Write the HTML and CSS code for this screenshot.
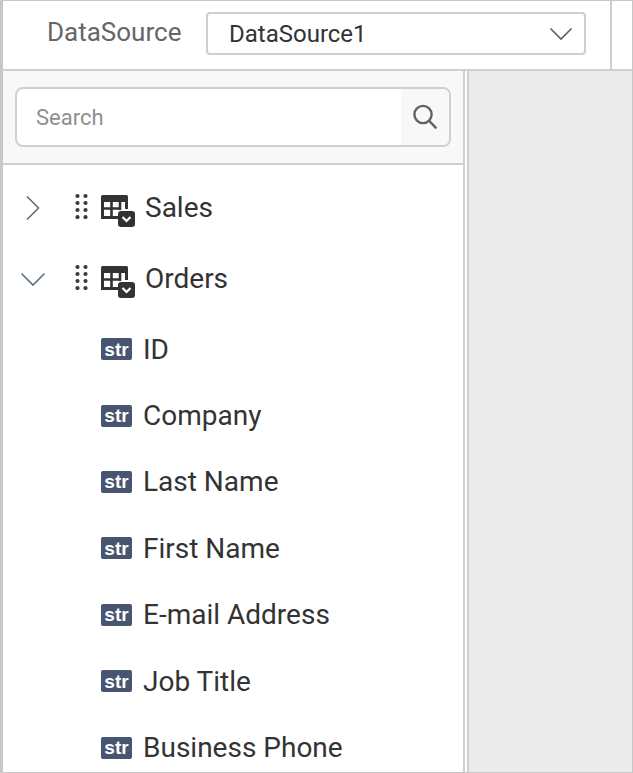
FILE: index.html
```html
<!DOCTYPE html>
<html lang="en">
<head>
<meta charset="utf-8">
<title>Data panel</title>
<link rel="stylesheet" href="styles.css">
</head>
<body>
<div class="frame">
  <header class="topbar">
    <div class="source">
      <span class="source-label">DataSource</span>
      <div class="select">
        <span class="select-value">DataSource1</span>
        <svg class="select-arrow" width="24" height="14" viewBox="0 0 24 14"><path d="M1.5 1.5 L12 12 L22.5 1.5" fill="none" stroke="#55606c" stroke-width="1.6"/></svg>
      </div>
    </div>
    <div class="top-end"></div>
  </header>
  <main class="body">
    <aside class="panel">
      <div class="search-band">
        <div class="search">
          <span class="search-input">Search</span>
          <span class="search-btn">
            <svg width="26" height="26" viewBox="0 0 26 26"><circle cx="11" cy="10.5" r="8.6" fill="none" stroke="#5f6368" stroke-width="2.4"/><path d="M17 16.6 L24.4 24.4" fill="none" stroke="#5f6368" stroke-width="2.4"/></svg>
          </span>
        </div>
      </div>
      <div class="tree">
        <div class="node">
          <svg class="twist" width="26" height="26" viewBox="0 0 26 26"><path d="M7 1.5 L18.5 13 L7 24.5" fill="none" stroke="#5b6f85" stroke-width="1.6"/></svg>
          <svg class="grip" width="14" height="26" viewBox="0 0 14 26"><g fill="#3a3a3a"><circle cx="2.5" cy="3" r="2.1"/><circle cx="10.5" cy="3" r="2.1"/><circle cx="2.5" cy="10" r="2.1"/><circle cx="10.5" cy="10" r="2.1"/><circle cx="2.5" cy="17" r="2.1"/><circle cx="10.5" cy="17" r="2.1"/><circle cx="2.5" cy="24" r="2.1"/><circle cx="10.5" cy="24" r="2.1"/></g></svg>
          <svg class="table" width="36" height="34" viewBox="0 0 36 34"><rect x="1" y="1" width="27" height="7" rx="1.5" fill="#333"/><path d="M26.5 4 V15 M2.5 4 V23.5 H18" fill="none" stroke="#333" stroke-width="3"/><path d="M2 14.5 H20 M11.5 7 V24 M20 7 V16" fill="none" stroke="#333" stroke-width="2.6"/><rect x="18" y="17" width="17" height="16" rx="3" fill="#333"/><path d="M22.5 23 L26.5 27 L30.5 23" fill="none" stroke="#fff" stroke-width="2.2"/></svg>
          <span class="node-name">Sales</span>
        </div>
        <div class="node">
          <svg class="twist" width="26" height="26" viewBox="0 0 26 26"><path d="M1.5 7.5 L13 19 L24.5 7.5" fill="none" stroke="#5b6f85" stroke-width="1.6"/></svg>
          <svg class="grip" width="14" height="26" viewBox="0 0 14 26"><g fill="#3a3a3a"><circle cx="2.5" cy="3" r="2.1"/><circle cx="10.5" cy="3" r="2.1"/><circle cx="2.5" cy="10" r="2.1"/><circle cx="10.5" cy="10" r="2.1"/><circle cx="2.5" cy="17" r="2.1"/><circle cx="10.5" cy="17" r="2.1"/><circle cx="2.5" cy="24" r="2.1"/><circle cx="10.5" cy="24" r="2.1"/></g></svg>
          <svg class="table" width="36" height="34" viewBox="0 0 36 34"><rect x="1" y="1" width="27" height="7" rx="1.5" fill="#333"/><path d="M26.5 4 V15 M2.5 4 V23.5 H18" fill="none" stroke="#333" stroke-width="3"/><path d="M2 14.5 H20 M11.5 7 V24 M20 7 V16" fill="none" stroke="#333" stroke-width="2.6"/><rect x="18" y="17" width="17" height="16" rx="3" fill="#333"/><path d="M22.5 23 L26.5 27 L30.5 23" fill="none" stroke="#fff" stroke-width="2.2"/></svg>
          <span class="node-name">Orders</span>
        </div>
        <ul class="fields">
          <li class="field"><span class="badge">str</span><span class="field-name">ID</span></li>
          <li class="field"><span class="badge">str</span><span class="field-name">Company</span></li>
          <li class="field"><span class="badge">str</span><span class="field-name">Last Name</span></li>
          <li class="field"><span class="badge">str</span><span class="field-name">First Name</span></li>
          <li class="field"><span class="badge">str</span><span class="field-name">E-mail Address</span></li>
          <li class="field"><span class="badge">str</span><span class="field-name">Job Title</span></li>
          <li class="field"><span class="badge">str</span><span class="field-name">Business Phone</span></li>
        </ul>
      </div>
    </aside>
    <div class="canvas"></div>
  </main>
</div>
</body>
</html>
```

FILE: styles.css
```css
* {
  box-sizing: border-box;
}

html,
body {
  margin: 0;
  height: 100%;
  overflow: hidden;
}

body {
  font-family: Roboto, "Liberation Sans", sans-serif;
  background: #fff;
}

.frame {
  width: 633px;
  height: 773px;
  display: flex;
  flex-direction: column;
  border-style: solid;
  border-color: #c8c8c8;
  border-width: 1px 1px 1px 3px;
  overflow: hidden;
}

.topbar {
  height: 70px;
  flex: none;
  display: flex;
  border-bottom: 2px solid #cfcfcf;
}

.source {
  width: 609px;
  flex: none;
  display: flex;
  align-items: flex-start;
  padding: 11px 0 0 44px;
  border-right: 2px solid #cfcfcf;
}

.top-end {
  flex: 1;
}

.source-label {
  width: 159px;
  flex: none;
  font-size: 26px;
  line-height: 40px;
  color: #666;
}

.select {
  width: 380px;
  height: 43px;
  flex: none;
  display: flex;
  align-items: center;
  justify-content: space-between;
  padding: 0 11px 0 21px;
  border: 2px solid #cfcfcf;
  border-radius: 4px;
}

.select-value {
  font-size: 24px;
  color: #333;
}

.body {
  flex: 1;
  min-height: 0;
  display: flex;
}

.panel {
  width: 462px;
  flex: none;
  display: flex;
  flex-direction: column;
  border-right: 2px solid #cfcfcf;
}

.search-band {
  height: 94px;
  flex: none;
  padding: 16px 12px 0 12px;
  background: #f8f8f8;
  border-bottom: 2px solid #cfcfcf;
}

.search {
  height: 60px;
  display: flex;
  background: #fff;
  border: 2px solid #cfcfcf;
  border-radius: 8px;
  overflow: hidden;
}

.search-input {
  flex: 1;
  padding-left: 19px;
  font-size: 22px;
  line-height: 58px;
  color: #8f8f8f;
}

.search-btn {
  width: 48px;
  flex: none;
  display: flex;
  align-items: center;
  justify-content: center;
  background: #f8f8f8;
}

.tree {
  flex: 1;
  min-height: 0;
  padding-top: 7px;
  overflow: hidden;
}

.node {
  height: 71px;
  display: flex;
  align-items: center;
  padding-left: 17px;
}

.twist {
  flex: none;
}

.grip {
  flex: none;
  margin: -3px 0 0 29px;
}

.table {
  flex: none;
  margin: 6px 0 0 11px;
}

.node-name {
  margin: 0 0 0 9px;
  font-size: 28px;
  color: #333;
}

.fields {
  margin: 2px 0 0;
  padding: 0;
  list-style: none;
}

.field {
  height: 66.4px;
  display: flex;
  align-items: center;
  padding-left: 98px;
}

.badge {
  width: 31px;
  height: 22px;
  flex: none;
  display: flex;
  align-items: center;
  justify-content: center;
  background: #475570;
  border-radius: 2px;
  font-family: "Liberation Sans", Arial, sans-serif;
  font-size: 19px;
  font-weight: 700;
  line-height: 1;
  color: #fff;
}

.field-name {
  margin-left: 11px;
  font-size: 28px;
  color: #333;
}

.canvas {
  flex: 1;
  margin-left: 2px;
  background: #ebebeb;
  border-left: 2px solid #cfcfcf;
}
```
